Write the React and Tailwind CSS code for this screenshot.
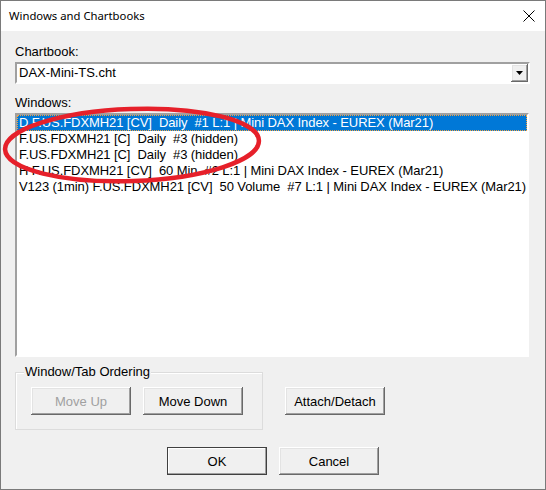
import React from 'react';

// Windows-classic 3D edges
const raised =
  'shadow-[inset_-1px_-1px_#696969,inset_1px_1px_#ffffff,inset_-2px_-2px_#a0a0a0,inset_2px_2px_#e3e3e3]';
const sunken = 'border-2 border-t-[#a0a0a0] border-l-[#a0a0a0] border-b-white border-r-white';

const rows = [
  'D F.US.FDXMH21 [CV]  Daily  #1 L:1 | Mini DAX Index - EUREX (Mar21)',
  'F.US.FDXMH21 [C]  Daily  #3 (hidden)',
  'F.US.FDXMH21 [C]  Daily  #3 (hidden)',
  'H F.US.FDXMH21 [CV]  60 Min  #2 L:1 | Mini DAX Index - EUREX (Mar21)',
  'V123 (1min) F.US.FDXMH21 [CV]  50 Volume  #7 L:1 | Mini DAX Index - EUREX (Mar21)',
];

const Button = ({ children, disabled, isDefault, className = '' }) => (
  <button
    disabled={disabled}
    className={`w-[100px] h-[28px] bg-[#f0f0f0] text-[13px] leading-none ${
      isDefault
        ? 'border border-[#404040] shadow-[inset_-1px_-1px_#a0a0a0,inset_1px_1px_#ffffff]'
        : raised
    } ${disabled ? 'text-[#a0a0a0]' : 'text-black'} ${className}`}
  >
    {children}
  </button>
);

export default function App() {
  return (
    <div className="relative w-[546px] h-[490px] bg-[#f0f0f0] border border-[#7a7a7a] font-['Liberation_Sans',Arial,sans-serif] text-[13px] text-black flex flex-col overflow-hidden">
      {/* title bar */}
      <div className="h-[30px] bg-white flex items-center justify-between shrink-0">
        <span className="pl-[8px] font-['Noto_Sans',sans-serif] text-[11.3px] text-black">
          Windows and Chartbooks
        </span>
        <svg width="12" height="12" viewBox="0 0 12 12" className="mr-[10px]">
          <path d="M0.5 0.5L11.5 11.5M11.5 0.5L0.5 11.5" stroke="#000" strokeWidth="1" />
        </svg>
      </div>

      <div className="flex flex-col px-[14px]">
        <div className="mt-[13px] leading-[16px]">Chartbook:</div>

        {/* combo box */}
        <div className={`mt-[2px] h-[22px] w-[515px] bg-white ${sunken} flex items-center justify-between`}>
          <span className="pl-[2px] leading-[16px]">DAX-Mini-TS.cht</span>
          <div className={`w-[17px] h-[18px] bg-[#f0f0f0] ${raised} flex items-center justify-center`}>
            <svg width="7" height="4" viewBox="0 0 7 4">
              <path d="M0 0H7L3.5 4Z" fill="#000" />
            </svg>
          </div>
        </div>

        <div className="mt-[11px] leading-[16px]">Windows:</div>

        {/* window list */}
        <div className={`mt-[2px] h-[244px] w-[514px] bg-white ${sunken}`}>
          {rows.map((r, i) => (
            <div
              key={i}
              className={`h-[16px] leading-[16px] pl-[2px] whitespace-pre tracking-[-0.08px] ${
                i === 0
                  ? 'bg-[#0078d7] text-white outline-1 outline-dotted outline-[#f5a340] -outline-offset-1'
                  : ''
              }`}
            >
              {r}
            </div>
          ))}
        </div>

        <div className="flex items-start mt-[15px]">
          {/* ordering group */}
          <div className="relative w-[248px] h-[58px] border border-[#dcdcdc] shadow-[inset_1px_1px_#ffffff] flex gap-[12px] pl-[15px] pt-[14px]">
            <span className="absolute left-[8px] top-[-9px] bg-[#f0f0f0] px-[1px] leading-[16px]">
              Window/Tab Ordering
            </span>
            <Button disabled>Move Up</Button>
            <Button>Move Down</Button>
          </div>
          <Button className="ml-[22px] mt-[15px]">Attach/Detach</Button>
        </div>

        <div className="flex gap-[12px] ml-[152px] mt-[17px]">
          <Button isDefault>OK</Button>
          <Button>Cancel</Button>
        </div>
      </div>

      {/* red marker ring drawn over the list */}
      <svg className="absolute left-0 top-0 pointer-events-none" width="546" height="490">
        <ellipse
          cx="131"
          cy="144"
          rx="127"
          ry="36"
          transform="rotate(-2 131 144)"
          fill="none"
          stroke="#e6202a"
          strokeWidth="4.5"
        />
      </svg>
    </div>
  );
}
